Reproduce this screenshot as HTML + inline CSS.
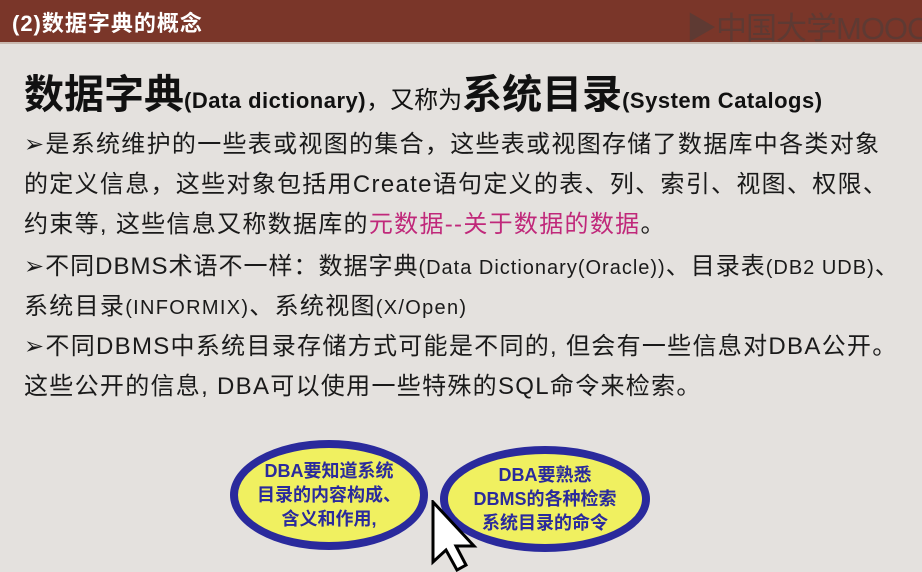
<!DOCTYPE html>
<html><head><meta charset="utf-8"><style>
body{margin:0;width:922px;height:572px;overflow:hidden;background:#e4e1de;font-family:"Liberation Sans","Noto Sans CJK SC",sans-serif;position:relative}
.hdr{position:absolute;left:0;top:0;width:922px;height:42px;background:#7a3629;border-bottom:2px solid #c9b9b0}
.hdr span{position:absolute;left:12px;top:6px;color:#fff;font-weight:bold;font-size:22px;letter-spacing:1px}
.logo{position:absolute;left:686px;top:3px;color:#5e3a33;font-size:31px;letter-spacing:-1px;white-space:nowrap}
.t{position:absolute;left:24px;top:62px;font-size:40px;font-weight:bold;color:#111;white-space:nowrap}
.t small{font-size:22px;letter-spacing:0.5px}
.t .m{font-size:24px;font-weight:normal}
.l{position:absolute;left:24px;font-size:24px;color:#1a1a1a;white-space:nowrap;letter-spacing:1.3px}
.pk{color:#c0287a}
.e{position:absolute;border:8px solid #2a2a9c;background:#f0f060;border-radius:50%;box-sizing:border-box;display:flex;align-items:center;justify-content:center;text-align:center;color:#2a2a9c;font-weight:bold;font-size:18px;line-height:24px}
</style></head><body>
<div class="hdr"><span>(2)数据字典的概念</span><div class="logo">▶中国大学MOOC</div></div>
<div class="t">数据字典<small>(Data dictionary)</small><span class="m">，又称为</span>系统目录<small>(System Catalogs)</small></div>
<div class="l" style="top:124px">➢是系统维护的一些表或视图的集合，这些表或视图存储了数据库中各类对象</div>
<div class="l" style="top:164px">的定义信息，这些对象包括用Create语句定义的表、列、索引、视图、权限、</div>
<div class="l" style="top:204px">约束等, 这些信息又称数据库的<span class="pk">元数据--关于数据的数据</span>。</div>
<div class="l" style="top:246px;letter-spacing:1px">➢不同DBMS术语不一样：数据字典<span style="font-size:20px">(Data Dictionary(Oracle))</span>、目录表<span style="font-size:20px">(DB2 UDB)</span>、</div>
<div class="l" style="top:286px">系统目录<span style="font-size:20px">(INFORMIX)</span>、系统视图<span style="font-size:20px">(X/Open)</span></div>
<div class="l" style="top:326px">➢不同DBMS中系统目录存储方式可能是不同的, 但会有一些信息对DBA公开。</div>
<div class="l" style="top:366px">这些公开的信息, DBA可以使用一些特殊的SQL命令来检索。</div>
<div class="e" style="left:230px;top:440px;width:198px;height:110px">DBA要知道系统<br>目录的内容构成、<br>含义和作用,</div>
<div class="e" style="left:440px;top:446px;width:210px;height:106px">DBA要熟悉<br>DBMS的各种检索<br>系统目录的命令</div>
<svg style="position:absolute;left:430px;top:500px" width="50" height="72"><path d="M3 2 L3 62 L16 50 L27 70 L36 65 L26 46 L44 46 Z" fill="#fff" stroke="#000" stroke-width="3"/></svg>
</body></html>
